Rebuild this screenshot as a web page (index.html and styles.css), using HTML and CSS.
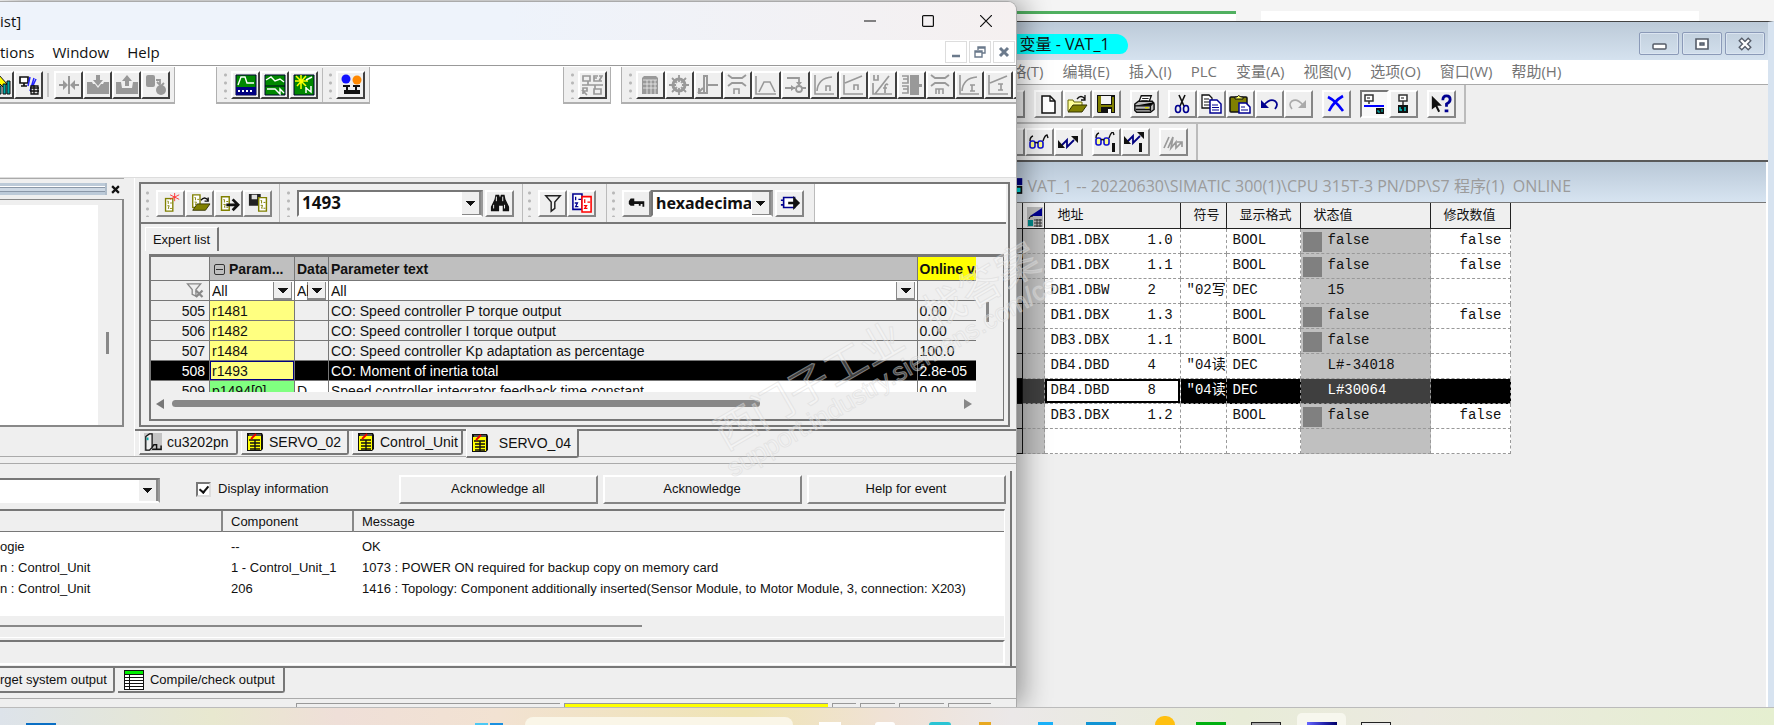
FILE: index.html
```html
<!DOCTYPE html>
<html lang="zh-CN">
<head>
<meta charset="utf-8">
<title>Expert list / VAT_1</title>
<link rel="stylesheet" href="styles.css">
</head>
<body>
<svg class="defs" aria-hidden="true">
  <symbol id="page12" viewBox="0 0 10 16"><path d="M1 1h8v14H1z" fill="#fff" stroke="#808000" stroke-width="1.5"/><path d="M3 4h1v3M6 6h2M3 9h2l-1 3h1M6 12h2" fill="none" stroke="#808000"/></symbol>
  <symbol id="drive" viewBox="0 0 18 20"><path d="M1 1h15l1 2v14l-2 2H1z" fill="#111"/><path d="M2 4h13v14H2z" fill="#ff0"/><path d="M3 8h11M4 11h10M4 14h10M4 17h10M9 8v10" stroke="#111" stroke-width="1.4"/><path d="M3 3h12" stroke="#999"/><path d="M5 7l5-5" stroke="#e00" stroke-width="1.8"/></symbol>
  <symbol id="glasses" viewBox="0 0 22 20"><g fill="#ff8" stroke="#1010d0" stroke-width="1.6"><rect x="2" y="9" width="5" height="7" rx="2"/><rect x="10" y="9" width="5" height="7" rx="2"/></g><path d="M2 9q0-4 3-5M15 9q2-6 4-6l1 3M7 11q1-1 3 0" fill="none" stroke="#111" stroke-width="1.4"/></symbol>
  <symbol id="zigzag" viewBox="0 0 22 20"><path d="M4 14l6-6v7l7-7" fill="none" stroke="#000080" stroke-width="1.8"/><path d="M1 8v8h7zM14 4h7v7z" fill="#111"/></symbol>
  <symbol id="curve" viewBox="0 0 22 22"><path d="M2 1v19h19M4 17Q5 4 19 3" fill="none" stroke="#999" stroke-width="1.6"/></symbol>
  <symbol id="ramp" viewBox="0 0 22 22"><path d="M2 1v19h19M3 9l17-7" fill="none" stroke="#999" stroke-width="1.6"/></symbol>
  <symbol id="press" viewBox="0 0 22 22"><path d="M2 1l4 3h10l4-3M2 12l4-3h10l4 3" fill="none" stroke="#999" stroke-width="1.8"/></symbol>
</svg>

<div class="desktop">
  <div class="backdrop"><div class="doc doc-green"></div><div class="doc doc-plain"></div></div>

  <section class="win vat">
    <header class="vat-title"><h1>变量 - VAT_1</h1>
      <div class="aero">
        <button aria-label="最小化"><svg viewBox="0 0 20 16"><rect x="4" y="8" width="13" height="5" rx="1" fill="#fff" stroke="#555c68" stroke-width="1.5"/></svg></button>
        <button aria-label="还原"><svg viewBox="0 0 20 16"><path d="M4 3h12v10H4z" fill="#fff" stroke="#555c68" stroke-width="1.6"/><path d="M8 7h4v2H8z" fill="#9fb0c8" stroke="#555c68" stroke-width="1.4"/></svg></button>
        <button aria-label="关闭"><svg viewBox="0 0 20 16"><path d="M5 3l10 10M15 3L5 13" stroke="#555c68" stroke-width="5"/><path d="M6 4l8 8M14 4l-8 8" stroke="#fff" stroke-width="2.4"/></svg></button>
      </div>
    </header>
    <nav class="vat-menu"><span class="cut">格(T)</span><span>编辑(E)</span><span>插入(I)</span><span>PLC</span><span>变量(A)</span><span>视图(V)</span><span>选项(O)</span><span>窗口(W)</span><span>帮助(H)</span></nav>
    <div class="vat-tools">
      <div class="strip first">
        <button class="tb sliver" aria-label="钉住"></button>
        <div class="set">
          <button class="tb" aria-label="新建"><svg viewBox="0 0 22 20"><path d="M5 2h8l5 5v12H5z" fill="#fff" stroke="#111" stroke-width="1.5"/><path d="M13 2v5h5" fill="none" stroke="#111" stroke-width="1.3"/></svg></button>
          <button class="tb" aria-label="打开"><svg viewBox="0 0 22 20"><path d="M2 17V6h5l1 2h8v4" fill="#ff9" stroke="#660"/><path d="M2 18l5-7h14l-5 7z" fill="#808000" stroke="#330"/><path d="M11 5q4-5 8 0M19 1v5h-4" fill="none" stroke="#111" stroke-width="1.3"/></svg></button>
          <button class="tb" aria-label="保存"><svg viewBox="0 0 22 20"><path d="M2 1h18v18H3l-1-1z" fill="#111"/><path d="M3 2h3v16H3zM17 3h2v15h-2z" fill="#808000"/><path d="M6 2h10v8H6z" fill="#f4f4f4"/><path d="M6 11h11v2H6z" fill="#808000"/><path d="M13 15h3v4h-3z" fill="#fff"/></svg></button>
        </div>
        <div class="set"><button class="tb" aria-label="打印"><svg viewBox="0 0 24 20"><path d="M6 9l3-8h11l-3 8z" fill="#fff" stroke="#111" stroke-width="1.4"/><path d="M10 4h7M9 6.500h7" stroke="#111"/><path d="M2 10l4-3h15l2 3v6l-4 3H4l-2-2z" fill="#bbb" stroke="#111" stroke-width="1.6"/><path d="M2 12h17l4-4M3 16h16M19 12v6" stroke="#111" stroke-width="1.4"/><path d="M13 14h4" stroke="#dd0" stroke-width="1.5"/></svg></button></div>
        <div class="set">
          <button class="tb" aria-label="剪切"><svg viewBox="0 0 22 20"><path d="M8 1l5 11M14 1L9 12" stroke="#111" stroke-width="1.6"/><ellipse cx="7" cy="15" rx="2.500" ry="3.500" fill="none" stroke="#000090" stroke-width="1.6"/><ellipse cx="15" cy="15" rx="2.500" ry="3.500" fill="none" stroke="#000090" stroke-width="1.6"/></svg></button>
          <button class="tb" aria-label="复制"><svg viewBox="0 0 22 20"><path d="M2 1h7l3 3v10H2z" fill="#fff" stroke="#111" stroke-width="1.3"/><path d="M4 5h5M4 8h6M4 11h6" stroke="#111"/><path d="M10 6h7l4 4v9H10z" fill="#fff" stroke="#000090" stroke-width="1.5"/><path d="M12 11h6M12 13.500h7M12 16h7" stroke="#000090"/></svg></button>
          <button class="tb" aria-label="粘贴"><svg viewBox="0 0 22 20"><rect x="1" y="3" width="17" height="15" rx="1" fill="#808000" stroke="#111" stroke-width="1.5"/><path d="M6 5V3h2q1-3 4 0h2v2z" fill="#ff6" stroke="#111"/><path d="M10 9h7l4 4v6H10z" fill="#fff" stroke="#000090" stroke-width="1.5"/><path d="M12 13h4M12 16h7" stroke="#000090"/></svg></button>
          <button class="tb" aria-label="撤消"><svg viewBox="0 0 22 20"><path d="M3 6v8h8z" fill="#000090"/><path d="M6 11q6-7 11-4 4 3 0 8" fill="none" stroke="#000090" stroke-width="1.8"/></svg></button>
          <button class="tb" aria-label="重做"><svg viewBox="0 0 22 20"><path d="M19 6v8h-8z" fill="#aaa"/><path d="M16 11q-6-7-11-4-4 3 0 8" fill="none" stroke="#aaa" stroke-width="1.6"/></svg></button>
        </div>
        <div class="set"><button class="tb" aria-label="删除"><svg viewBox="0 0 22 20"><path d="M3 3q8 4 15 14M18 2Q9 7 4 17" fill="none" stroke="#00f" stroke-width="2.600"/></svg></button></div>
        <div class="set">
          <button class="tb down" aria-label="在线"><svg viewBox="0 0 22 20"><path d="M2 1h8v6H2zM6 7v3" fill="#fff" stroke="#333" stroke-width="1.5"/><path d="M4 4h3" stroke="#111"/><path d="M1 11h20v2H1z" fill="#00f"/><path d="M13 14h8v6h-8z" fill="#111"/><path d="M15 16v2h2M19 15v3" stroke="#0cc" fill="none"/></svg></button>
          <button class="tb" aria-label="直接在线"><svg viewBox="0 0 22 20"><path d="M7 1h8v6H7zM11 7v5" fill="#fff" stroke="#333" stroke-width="1.5"/><path d="M9 4h3" stroke="#111"/><path d="M6 11h10v8H6z" fill="#111"/><path d="M8 13v3h2M13 13v4" stroke="#0cc" stroke-width="1.4" fill="none"/></svg></button>
        </div>
        <div class="set"><button class="tb" aria-label="帮助"><svg viewBox="0 0 24 20"><path d="M2 1v15l4-3 3 6 2-1-3-6h5z" fill="#111"/><path d="M14 6q0-5 4-5t4 4q0 3-4 5v3" fill="none" stroke="#000090" stroke-width="3"/><path d="M16 16h4v3h-4z" fill="#000090"/></svg></button></div>
      </div>
      <div class="strip second">
        <button class="tb sliver" aria-label="触发器"></button>
        <button class="tb" aria-label="监视变量"><svg viewBox="0 0 22 20"><use href="#glasses"/></svg></button>
        <button class="tb" aria-label="修改变量"><svg viewBox="0 0 22 20"><use href="#zigzag"/></svg></button>
        <div class="set">
          <button class="tb" aria-label="更新状态值"><svg viewBox="0 0 22 20"><use href="#glasses" x="-1" y="-3"/><path d="M17 11h3v9h-3z" fill="#111"/></svg></button>
          <button class="tb" aria-label="激活修改值"><svg viewBox="0 0 22 20"><use href="#zigzag" x="-1" y="-4"/><path d="M15 11h3v9h-3z" fill="#111"/></svg></button>
        </div>
        <div class="set"><button class="tb" aria-label="强制"><svg viewBox="0 0 22 20"><path d="M2 16L7 5M6 16l5-11-2 11 5-6v6l6-6M15 10h5v5" fill="none" stroke="#999" stroke-width="1.7"/></svg></button></div>
      </div>
    </div>
    <div class="vat-child">
      <header class="child-title"><svg viewBox="0 0 8 20"><path d="M0 1h6v8H0z" fill="#000080"/><path d="M0 10h6v9H0z" fill="#111"/><path d="M0 12h4v5H0z" fill="#0dd"/></svg><h2>VAT_1 -- 20220630\SIMATIC 300(1)\CPU 315T-3 PN/DP\S7 程序(1)&nbsp; ONLINE</h2></header>
      <table class="vars">
        <colgroup><col class="v0"><col class="v1"><col class="v2"><col class="v3"><col class="v4"><col class="v5"><col class="v6"></colgroup>
        <thead><tr><th></th><th class="ico"><svg viewBox="0 0 16 20"><path d="M0 0h16v20H0z" fill="#bbb"/><path d="M3 9l12-8v8z" fill="#000090"/><path d="M2 12q0-3 4-3" fill="none" stroke="#111"/><path d="M1 13h5v6H1z" fill="#088"/><path d="M7 13h8M7 16h8M7 19h8M10 12v8M13 12v8" stroke="#333"/></svg></th><th>地址</th><th>符号</th><th>显示格式</th><th>状态值</th><th>修改数值</th></tr></thead>
        <tbody>
          <tr><td></td><td></td><td><div class="pair"><span>DB1.DBX</span><span>1.0</span></div></td><td></td><td>BOOL</td><td class="bit"><i></i>false</td><td>false</td></tr>
          <tr><td></td><td></td><td><div class="pair"><span>DB1.DBX</span><span>1.1</span></div></td><td></td><td>BOOL</td><td class="bit"><i></i>false</td><td>false</td></tr>
          <tr><td></td><td></td><td><div class="pair"><span>DB1.DBW</span><span>2</span></div></td><td>"02写</td><td>DEC</td><td>15</td><td></td></tr>
          <tr><td></td><td></td><td><div class="pair"><span>DB1.DBX</span><span>1.3</span></div></td><td></td><td>BOOL</td><td class="bit"><i></i>false</td><td>false</td></tr>
          <tr><td></td><td></td><td><div class="pair"><span>DB3.DBX</span><span>1.1</span></div></td><td></td><td>BOOL</td><td class="bit"><i></i>false</td><td></td></tr>
          <tr><td></td><td></td><td><div class="pair"><span>DB4.DBD</span><span>4</span></div></td><td>"04读</td><td>DEC</td><td>L#-34018</td><td></td></tr>
          <tr class="sel"><td></td><td></td><td><div class="pair"><span>DB4.DBD</span><span>8</span></div></td><td>"04读</td><td>DEC</td><td>L#30064</td><td></td></tr>
          <tr><td></td><td></td><td><div class="pair"><span>DB3.DBX</span><span>1.2</span></div></td><td></td><td>BOOL</td><td class="bit"><i></i>false</td><td>false</td></tr>
          <tr><td></td><td></td><td></td><td></td><td></td><td></td><td></td></tr>
        </tbody>
      </table>
    </div>
  </section>

  <section class="win starter">
    <header class="top-title"><h1>ist]</h1>
      <div class="caps">
        <button aria-label="Minimize"><svg viewBox="0 0 12 12"><path d="M0 6h12" stroke="#111" stroke-width="1.2"/></svg></button>
        <button aria-label="Maximize"><svg viewBox="0 0 12 12"><rect x=".6" y=".6" width="10.800" height="10.800" rx="1" fill="none" stroke="#111" stroke-width="1.2"/></svg></button>
        <button aria-label="Close"><svg viewBox="0 0 12 12"><path d="M0 0l12 12M12 0L0 12" stroke="#111" stroke-width="1.2"/></svg></button>
      </div>
    </header>
    <nav class="top-menu"><span>tions</span><span>Window</span><span>Help</span>
      <div class="mdi">
        <button aria-label="Minimize child"><svg viewBox="0 0 12 12"><path d="M2 10h8" stroke="#6b7a8c" stroke-width="2.500"/></svg></button>
        <button aria-label="Restore child"><svg viewBox="0 0 12 12"><path d="M4 4V1h7v6H8M4 2h7M1 5h7v6H1zM1 6h7" fill="none" stroke="#6b7a8c" stroke-width="1.4"/></svg></button>
        <button aria-label="Close child"><svg viewBox="0 0 12 12"><path d="M2 2l8 8M10 2l-8 8" stroke="#6b7a8c" stroke-width="3"/></svg></button>
      </div>
    </nav>
    <div class="bars">
      <div class="bar b1">
        <button class="tb dk half" aria-label="Project"><svg viewBox="0 0 22 22"><path d="M10 1l8 9-4 3-8-8z" fill="#ff0" stroke="#111"/><path d="M9 12h3v8H9zM14 10h3v10h-3zM18 7h3v13h-3z" fill="#0aa" stroke="#111"/></svg></button>
        <button class="tb dk" aria-label="Connect"><svg viewBox="0 0 22 22"><path d="M2 3h8v6H2zM6 9v3M3 12h6" fill="#fff" stroke="#111" stroke-width="1.7"/><path d="M12 3l-2 9M16 4l-4 13M18 5l-5 11" stroke="#22f" stroke-width="1.5"/><path d="M13 12h7v8h-7zM12 14h9M12 17h9M16 11v9" fill="#ddd" stroke="#111" stroke-width="1.3"/></svg></button>
        <i class="rule"></i>
        <button class="tb dk" disabled aria-label="Align"><svg viewBox="0 0 22 22"><path d="M10 2h2v18h-2zM1 10h4V6l5 5-5 5v-4H1zM21 10h-4V6l-5 5 5 5v-4h4z" fill="#999"/></svg></button>
        <button class="tb dk" disabled aria-label="Download"><svg viewBox="0 0 22 22"><path d="M0 8h5l1 2h2l3 4 3-4h2l1-2h5v12H0zM9 1h4v5h3l-5 6-5-6h3z" fill="#999"/></svg></button>
        <button class="tb dk" disabled aria-label="Upload"><svg viewBox="0 0 22 22"><path d="M0 8h5l1 6h10l1-6h5v12H0z" fill="#999"/><path d="M9 12V7H6l5-6 5 6h-3v5z" fill="#999"/></svg></button>
        <button class="tb dk" disabled aria-label="Copy to ROM"><svg viewBox="0 0 22 22"><rect x="1" y="1" width="9" height="12" rx="2" fill="#999"/><circle cx="16" cy="16" r="5" fill="#999"/><path d="M11 6h4v4M12 8l4 4 3-3" fill="none" stroke="#999" stroke-width="1.8"/></svg></button>
      </div>
      <div class="bar b2">
        <i class="grip"></i>
        <button class="tb dk" aria-label="Trace"><svg viewBox="0 0 22 22"><path d="M1 1h20v20H1z" fill="#080" stroke="#003"/><path d="M1 13h20v8H1z" fill="#000080"/><path d="M3 11l3-8h4l2 6h7" fill="none" stroke="#fff" stroke-width="1.4"/><path d="M3 17h16" stroke="#fff" stroke-width="2" stroke-dasharray="2 2"/></svg></button>
        <button class="tb dk" aria-label="Bode"><svg viewBox="0 0 22 22"><path d="M1 1h20v20H1z" fill="#080" stroke="#003"/><path d="M1 12h20" stroke="#002"/><path d="M2 6l5-3 4 4 5-2 4 3M3 15h8l5 5v-5l4 4" fill="none" stroke="#fff" stroke-width="1.4"/></svg></button>
        <button class="tb dk" aria-label="Measure"><svg viewBox="0 0 22 22"><path d="M1 1h20v20H1z" fill="#080" stroke="#003"/><path d="M8 1v14M2 7h13M3 2l10 10M13 2L4 12" stroke="#ff0" stroke-width="1.500"/><path d="M13 6l6-3M13 19v-6M13 14l5 4v-6" stroke="#fff" stroke-width="1.5" fill="none"/></svg></button>
        <i class="seam"></i><i class="grip"></i>
        <button class="tb dk" aria-label="Assign"><svg viewBox="0 0 22 22"><circle cx="6" cy="5" r="4.500" fill="#11f"/><circle cx="17" cy="6" r="4.500" fill="#f80"/><path d="M3 12h7M13 12h7M7 12v4M16 12v4" stroke="#111" stroke-width="2"/><path d="M4 16h16v4H4z" fill="#111"/></svg></button>
      </div>
      <div class="bar b3"><i class="grip"></i><button class="tb dk" disabled aria-label="Overview"><svg viewBox="0 0 22 22" fill="none" stroke="#999" stroke-width="1.7"><path d="M2 2h7v5H2zM17 2h-4v5h4M13 4h3M18 2h3l-3 5h3M1 11h21M7 7v4M2 20v-6h4v3H2l4 4M14 11v4M13 15h7v5h-7z"/></svg></button></div>
      <div class="bar b4"><i class="grip"></i>
        <button class="tb dk" disabled aria-label="Configuration"><svg viewBox="0 0 22 22"><path d="M3 4l2-2h12l2 2v16H3z" fill="#999"/><path d="M4 6h14M4 10h14M4 14h14M8 6v14M12 6v14M16 6v14" stroke="#eee" stroke-width=".8"/></svg></button>
        <button class="tb dk" disabled aria-label="Control logic"><svg viewBox="0 0 22 22"><circle cx="11" cy="11" r="6" fill="none" stroke="#999" stroke-width="3"/><path d="M11 1v20M1 11h20M4 4l14 14M18 4L4 18" stroke="#999" stroke-width="1.8"/><circle cx="11" cy="11" r="3" fill="#eee"/></svg></button>
        <button class="tb dk" disabled aria-label="Brake"><svg viewBox="0 0 22 22"><path d="M7 2h3v17H7zM11 11h10M1 19l5-5M2 14v5h5" fill="none" stroke="#999" stroke-width="2"/></svg></button>
        <button class="tb dk" disabled aria-label="Speed limit"><svg viewBox="0 0 22 22"><use href="#press"/><path d="M8 20v-5h5v5" fill="none" stroke="#999" stroke-width="1.6"/></svg></button>
        <button class="tb dk" disabled aria-label="Ramp function"><svg viewBox="0 0 22 22"><path d="M1 2v18h20M4 18L9 8h6l5 10" fill="none" stroke="#999" stroke-width="1.6"/></svg></button>
        <button class="tb dk" disabled aria-label="Setpoint"><svg viewBox="0 0 22 22"><path d="M3 4h12v6M1 14h10M18 14h4" fill="none" stroke="#999" stroke-width="1.8"/><circle cx="15" cy="15" r="3" fill="none" stroke="#999" stroke-width="1.8"/><path d="M12 8h6l-3 4zM7 11v6l4-3z" fill="#999"/></svg></button>
        <button class="tb dk" disabled aria-label="Speed controller"><svg viewBox="0 0 22 22"><use href="#curve"/><path d="M13 17v-5h4v5" fill="none" stroke="#999" stroke-width="1.6"/></svg></button>
        <button class="tb dk" disabled aria-label="Speed ramp"><svg viewBox="0 0 22 22"><use href="#ramp"/><path d="M12 16v-5h4v5" fill="none" stroke="#999" stroke-width="1.6"/></svg></button>
        <button class="tb dk" disabled aria-label="U/f control"><svg viewBox="0 0 22 22"><path d="M3 1v5h4V1M2 9v11h19M4 20L18 2M17 11q-2-2-3 1v7M12 14h4" fill="none" stroke="#999" stroke-width="1.7"/></svg></button>
        <button class="tb dk" disabled aria-label="Motor"><svg viewBox="0 0 22 22"><path d="M10 1h9v20h-9zM19 10h3v3h-3z" fill="#999"/><path d="M2 2h6v3H3M8 5v4H2M2 12h6v7H2M3 15h5" fill="none" stroke="#999" stroke-width="1.7"/></svg></button>
        <button class="tb dk" disabled aria-label="Torque limit"><svg viewBox="0 0 22 22"><use href="#press"/><path d="M7 20v-5h7v5M10 15v5" fill="none" stroke="#999" stroke-width="1.6"/></svg></button>
        <button class="tb dk" disabled aria-label="Current controller"><svg viewBox="0 0 22 22"><use href="#curve"/><path d="M12 11h5M12 17h5M14 11v6" fill="none" stroke="#999" stroke-width="1.6"/></svg></button>
        <button class="tb dk" disabled aria-label="Current ramp"><svg viewBox="0 0 22 22"><use href="#ramp"/><path d="M11 10h5M11 16h5M14 10v6" fill="none" stroke="#999" stroke-width="1.6"/></svg></button>
        <button class="tb dk" disabled aria-label="More"><svg viewBox="0 0 22 22"><path d="M1 3h14v14H1z" fill="#999"/></svg></button>
      </div>
    </div>

    <div class="work">
      <aside class="tree">
        <div class="tree-head"><span class="bars-grip"></span><button aria-label="Close panel"><svg viewBox="0 0 8 8"><path d="M1 1l6 6M7 1L1 7" stroke="#111" stroke-width="2"/></svg></button></div>
        <div class="tree-body"><div class="tree-list"></div><div class="tree-scroll"><i></i></div></div>
      </aside>
      <main class="main">
        <div class="pane">
          <div class="pane-tools">
            <div class="group g1"><i class="grip"></i>
              <button class="tb" aria-label="New list"><svg viewBox="0 0 22 22"><use href="#page12" x="3" y="5" width="12" height="16"/><path d="M15 0v9M10 2l10 5M20 2l-10 5" stroke="#f33"/></svg></button>
              <button class="tb" aria-label="Open list"><svg viewBox="0 0 22 22"><use href="#page12" x="1" y="1" width="12" height="16"/><path d="M3 19l5-7h14l-5 7z" fill="#808000" stroke="#330"/><path d="M12 8q4-5 8 0M20 5v4h-4" fill="none" stroke="#111" stroke-width="1.5"/></svg></button>
              <button class="tb" aria-label="Go to list"><svg viewBox="0 0 22 22"><use href="#page12" x="1" y="3" width="12" height="17"/><path d="M8 13h12M15 7l6 6-6 6" fill="none" stroke="#111" stroke-width="3"/></svg></button>
              <button class="tb" aria-label="Save list"><svg viewBox="0 0 22 22"><path d="M1 1h13v13H1z" fill="#222"/><path d="M4 2h6v5H4z" fill="#ddd"/><use href="#page12" x="10" y="4" width="12" height="17"/></svg></button>
            </div>
            <div class="group g2"><i class="grip"></i>
              <select class="combo num" aria-label="Search"><option>1493</option></select>
              <button class="tb" aria-label="Find"><svg viewBox="0 0 22 22"><path d="M6 2h4l1 3 1-3h4l1 5 4 8v5h-7v-6h-4v6H1v-5l4-8z" fill="#111"/><path d="M7 4v5M14 4v5M4 13v4M16 13v4" stroke="#fff"/></svg></button>
            </div>
            <div class="group g3"><i class="grip"></i>
              <button class="tb" aria-label="Filter"><svg viewBox="0 0 22 22"><path d="M3 3h16l-6 7v7l-4 3V10z" fill="#eee" stroke="#222" stroke-width="1.6"/></svg></button>
              <button class="tb" aria-label="Compare"><svg viewBox="0 0 22 22"><path d="M1 1h10v17H1z" fill="#fff" stroke="#000090" stroke-width="1.700"/><path d="M4 4v4M7 7h3M3 11h3l-2 4h3" fill="none" stroke="#000090" stroke-width="1.4"/><path d="M11 4h10v17H11z" fill="#fff" stroke="#f00" stroke-width="1.700"/><path d="M14 7v4M17 10h3M13 14h3l-2 3h3" fill="none" stroke="#f00" stroke-width="1.4"/></svg></button>
            </div>
            <div class="group g4"><i class="grip"></i>
              <button class="tb" aria-label="Key"><svg viewBox="0 0 22 22"><path d="M2 9l2-3h4v3h11v6h-2v-3h-2v2h-2v-2H8v2H4l-2-2z" fill="#111"/></svg></button>
              <select class="combo hex" aria-label="Number format"><option>hexadecimal</option></select>
              <button class="tb gap" aria-label="Apply"><svg viewBox="0 0 22 22"><path d="M4 5h12v11H4zM1 8h3M1 13h3" fill="#fff" stroke="#000090" stroke-width="1.8"/><path d="M9 11h8M16 7l4 4-4 4z" stroke="#111" stroke-width="3" fill="#111"/></svg></button>
            </div>
          </div>
          <div class="tab-row"><button class="toptab">Expert list</button></div>
          <div class="sheet">
            <div class="grid-area">
              <div class="grid-clip">
              <table class="params">
                <colgroup><col class="c0"><col class="c1"><col class="c2"><col><col class="c4"></colgroup>
                <thead>
                  <tr class="hd"><th></th><th><span class="minus"></span>Param...</th><th>Data</th><th>Parameter text</th><th class="onl">Online value</th></tr>
                  <tr class="flt"><td class="n"><svg viewBox="0 0 18 16"><path d="M1 1h14l-5 6v7l-4-2V7z" fill="#eee" stroke="#888" stroke-width="1.4"/><path d="M10 8l7 7M17 8l-7 7" stroke="#888" stroke-width="2.400"/></svg></td><td><select aria-label="Filter parameter"><option>All</option></select></td><td><select aria-label="Filter data"><option>All</option></select></td><td><select aria-label="Filter text"><option>All</option></select></td><td></td></tr>
                </thead>
                <tbody>
                  <tr><td>505</td><td>r1481</td><td></td><td>CO: Speed controller P torque output</td><td>0.00</td></tr>
                  <tr><td>506</td><td>r1482</td><td></td><td>CO: Speed controller I torque output</td><td>0.00</td></tr>
                  <tr><td>507</td><td>r1484</td><td></td><td>CO: Speed controller Kp adaptation as percentage</td><td>100.0</td></tr>
                  <tr class="on"><td>508</td><td>r1493</td><td></td><td>CO: Moment of inertia total</td><td>2.8e-05</td></tr>
                  <tr class="wr"><td>509</td><td>p1494[0]</td><td>D</td><td>Speed controller integrator feedback time constant</td><td>0.00</td></tr>
                </tbody>
              </table>
              </div>
              <div class="vscroll"><i></i></div>
            </div>
            <div class="hscroll"><b class="larr"></b><span><i></i></span><b class="rarr"></b></div>
          </div>
        </div>
        <div class="doc-tabs">
          <button><svg viewBox="0 0 20 20"><path d="M0 0h20v20H0z" fill="#c4c4c4"/><path d="M2 4l4-3h3v15l-3 3H2z" fill="#eee" stroke="#111" stroke-width="1.4"/><path d="M4 5v3" stroke="#0aa" stroke-width="2"/><path d="M9 16l2-3h3v5h5v-4M9 18h6" fill="none" stroke="#111" stroke-width="1.6"/></svg>cu3202pn</button>
          <button><svg viewBox="0 0 18 20"><use href="#drive"/></svg>SERVO_02</button>
          <button><svg viewBox="0 0 18 20"><use href="#drive"/></svg>Control_Unit</button>
          <button class="cur"><svg viewBox="0 0 18 20"><use href="#drive"/></svg>SERVO_04</button>
        </div>
      </main>
    </div>

    <div class="alarm">
      <div class="alarm-tools">
        <select aria-label="Alarm filter"><option></option></select>
        <label><input type="checkbox" checked>Display information</label>
        <div class="acks"><button>Acknowledge all</button><button>Acknowledge</button><button>Help for event</button></div>
      </div>
      <div class="alarm-list">
        <table>
          <colgroup><col class="a0"><col class="a1"><col></colgroup>
          <thead><tr><th></th><th>Component</th><th>Message</th></tr></thead>
          <tbody>
            <tr><td>ogie</td><td>--</td><td>OK</td></tr>
            <tr><td>n : Control_Unit</td><td>1 - Control_Unit_1</td><td>1073 : POWER ON required for backup copy on memory card</td></tr>
            <tr><td>n : Control_Unit</td><td>206</td><td>1416 : Topology: Component additionally inserted(Sensor Module, to Motor Module, 3, connection: X203)</td></tr>
          </tbody>
        </table>
        <div class="alarm-scroll"><i></i></div>
      </div>
      <div class="alarm-note"></div>
    </div>
    <div class="out-tabs"><button class="cutleft">rget system output</button><button><svg viewBox="0 0 20 20"><path d="M0 0h20v20H0z" fill="#111"/><path d="M1 1h18v3H1z" fill="#0e0"/><path d="M1 5h4v2H1zM6 5h13v2H6zM1 8h4v2H1zM6 8h13v2H6zM1 11h4v2H1zM6 11h13v2H6zM1 14h4v2H1zM6 14h13v2H6zM1 17h4v2H1zM6 17h13v2H6z" fill="#fff"/></svg>Compile/check output</button></div>
    <div class="status"><i class="s1"></i><i class="s2"></i><i class="s3"></i><i class="s4"></i><i class="s5"></i><i class="s6"></i></div>
  </section>

  <div class="mark" aria-hidden="true"><p class="m1">西门子工业&ensp;&nbsp;找答案</p><p class="m2">support.industry.siemens.com/cs</p></div>

  <footer class="taskbar">
    <i class="wid"></i><i class="start"></i><i class="search"></i>
    <div class="apps">
      <button aria-label="Task view"><i class="k1"></i></button><button aria-label="Chat"><i class="k2"></i></button><button aria-label="Edge"><i class="k3"></i></button><button aria-label="Explorer"><i class="k4"></i></button><button aria-label="Store"><i class="k5"></i></button><button aria-label="Mail"><i class="k6"></i></button><button aria-label="Messenger"><i class="k7"></i></button><button aria-label="WeChat"><i class="k8"></i></button><button aria-label="Starter"><i class="k9"></i></button><button class="act" aria-label="SIMATIC"><i class="k10"></i></button><button aria-label="VAT"><i class="k11"></i></button>
    </div>
  </footer>
</div>
</body>
</html>
```

FILE: styles.css
```css
* { box-sizing: border-box; }
html, body { height: 100%; }
body { margin: 0; overflow: hidden; font: 14px/20px "Liberation Sans", "Noto Sans CJK SC", sans-serif; color: #111; }
h1, h2, p { margin: 0; font-weight: 400; }
button, select, input { font: inherit; color: inherit; margin: 0; }
button { padding: 0; background: none; border: 0; }
svg { display: block; flex: none; }
i { display: block; flex: none; }
.defs { position: absolute; width: 0; height: 0; }
.desktop { position: relative; height: 100vh; background: #f4f4f4; overflow: hidden; }
.backdrop { display: flex; gap: 25px; padding: 11px 75px 0 0; margin-left: 57.3%; }
.doc { height: 12px; background: #fff; }
.doc-green { flex: 1; border-top: 3px solid #50b060; }
.doc-plain { flex: 2; }
.win { position: absolute; display: flex; flex-direction: column; overflow: hidden; background: #efefef; }
.win > * { flex: none; }

/* raised tool buttons */
.tb { width: 29px; height: 28px; flex: none; display: flex; align-items: center; justify-content: center; background: #efefef; border: 2px solid; border-color: #fff #858585 #858585 #fff; }
.tb svg { width: 22px; height: 20px; }
.tb.dk { border-color: #fff #404040 #404040 #fff; }
.tb.down { background: #f8f8f8; border-color: #777 #fff #fff #777; }
.tb.sliver { width: 8px; border-left: 0; }
.grip { width: 3px; height: 28px; background: radial-gradient(circle, #b8b8b8 1px, transparent 2px) 0 0 / 3px 8px; }

/* variable table window */
.vat { top: 21px; bottom: 18px; left: 57.3%; right: 0; border-top: 1px solid #444; border-right: 6px solid #d7e3f0; }
.vat-title { display: flex; align-items: center; justify-content: space-between; height: 38px; padding-top: 5px; background: linear-gradient(#bccad8, #d5e2ef); font-family: "Open Sans", "Noto Sans CJK SC", sans-serif; }
.vat-title h1 { font-size: 16px; line-height: 20px; padding: 0 18px 0 3px; background: #0ff; border-radius: 0 12px 8px 0; }
.aero { display: flex; gap: 3px; padding-right: 3px; }
.aero button { width: 40px; height: 23px; border: 1px solid #8b9ab8; border-radius: 2px; box-shadow: inset 0 0 0 1px #dbe5f1; display: flex; align-items: center; justify-content: center; }
.aero svg { width: 20px; height: 16px; }
.vat-menu { display: flex; gap: 19px; height: 25px; line-height: 23px; background: #fff; color: #747474; font-family: "Open Sans", "Noto Sans CJK SC", sans-serif; font-size: 15px; border-bottom: 1px solid #aaa; overflow: hidden; white-space: nowrap; }
.vat-menu .cut { width: 27px; display: flex; justify-content: flex-end; }
.vat-tools { display: flex; flex-direction: column; align-items: flex-start; height: 77px; border-bottom: 2px solid #5a5a5a; }
.strip { display: flex; align-items: center; }
.strip.first { height: 39px; padding-top: 1px; padding-right: 8px; gap: 9px; border-right: 2px solid #bbb; border-bottom: 2px solid #bbb; }
.strip.second { height: 36px; padding-right: 8px; border-right: 2px solid #bbb; }
.strip.second .set { margin-left: 9px; }
.second .sliver { width: 8px; }
.set { display: flex; }
.vat > .vat-child { flex: 1; border-right: 2px solid #fff; }
.child-title { display: flex; align-items: center; gap: 4px; height: 41px; padding-top: 8px; background: linear-gradient(#b9c8d7, #d7e4f1); border-bottom: 1px solid #777; color: #9b9b9b; font-family: "Open Sans", "Noto Sans CJK SC", sans-serif; white-space: nowrap; }
.child-title svg { width: 7px; height: 20px; }
.child-title h2 { font-size: 16px; }
.vars { border-collapse: separate; border-spacing: 0; table-layout: fixed; width: 494px; font: 14px/20px "Liberation Mono", "Noto Sans CJK SC", monospace; }
.v0 { width: 6px; } .v1 { width: 22px; } .v2 { width: 136px; } .v3 { width: 46px; } .v4 { width: 74px; } .v5 { width: 130px; } .v6 { width: 80px; }
.vars th { height: 26px; padding: 1px 0 0 13px; font-weight: 400; font-size: 13px; background: #efefef; border-right: 1px solid #222; border-bottom: 1px solid #222; text-align: left; white-space: nowrap; overflow: hidden; }
.vars th:first-child, .vars th.ico { padding: 0; }
.vars .ico svg { width: 16px; height: 20px; margin: 2px 0 0 4px; }
.vars td { height: 25px; padding: 0 0 3px 6px; background: #fff; border-right: 1px dashed #999; border-bottom: 1px dashed #999; white-space: nowrap; overflow: hidden; }
.vars td:nth-child(1) { padding: 0; background: #bbb; border-right: 1px solid #111; border-bottom-style: solid; border-bottom-color: #111; }
.vars td:nth-child(2) { background: #bfbfbf; }
.vars td:nth-child(6) { padding-left: 27px; background: #c0c0c0; }
.vars td:nth-child(7) { padding-right: 8px; text-align: right; }
.pair { display: grid; grid-template-columns: 97px 1fr; }
.vars td.bit { padding-left: 2px; }
.bit i { float: left; width: 19px; height: 20px; margin: 2px 6px -2px 0; background: #808080; }
.vars .sel td { background: #000; color: #fff; }
.vars .sel td:nth-child(2), .vars .sel td:nth-child(6) { background: #3f3f3f; }
.vars .sel td:nth-child(3) { background: #fff; color: #111; box-shadow: inset 0 0 0 2px #000; }

/* drive window */
.starter { top: 1px; bottom: 18px; left: 0; width: 57.3%; border: solid #aaa; border-width: 1px 1px 0 0; border-top-right-radius: 9px; background: #efefef; box-shadow: 6px 0 28px rgba(0, 0, 0, .38); }
.top-title { display: flex; justify-content: space-between; align-items: center; height: 38px; padding-right: 1px; background: linear-gradient(90deg, #eef3fb 50%, #f5f0f0); font-family: "Open Sans", sans-serif; }
.top-title h1 { font-size: 15px; }
.caps { display: flex; }
.caps button { width: 58px; height: 38px; display: flex; align-items: center; justify-content: center; }
.caps svg { width: 12px; height: 12px; }
.top-menu { display: flex; align-items: center; gap: 18px; height: 26px; padding-bottom: 2px; background: #fff; border-bottom: 1px solid #999; font: 15px/22px "Open Sans", sans-serif; }
.mdi { display: flex; gap: 2px; margin: 0 1px 0 auto; }
.mdi button { width: 22px; height: 22px; border: 1px solid #ddd; display: flex; align-items: center; justify-content: center; }
.mdi svg { width: 12px; height: 12px; }
.bars { display: flex; align-items: flex-start; height: 112px; padding-top: 1px; background: #fff; border-bottom: 1px solid #ddd; }
.bar { display: flex; align-items: center; height: 37px; background: #efefef; border: solid #b0b0b0; border-width: 0 1px 2px; flex: none; }
.b1 { width: 175px; overflow: hidden; justify-content: flex-end; padding-right: 4px; border-left: 0; margin-right: 41px; }
.b1 .rule { width: 2px; height: 24px; margin: 0 5px 0 4px; background: #c4c4c4; }
.b2 { padding: 0 4px 0 7px; margin-right: auto; }
.b2 .grip { margin-right: 4px; }
.b2 .seam { width: 1px; height: 34px; background: #bbb; margin: 0 6px 0 4px; }
.b3 { padding: 0 3px 0 7px; margin-right: 10px; }
.b3 .grip, .b4 .grip { margin-right: 4px; }
.b4 { width: 395px; padding-left: 7px; overflow: hidden; border-right: 0; }
.bar .tb svg { width: 22px; height: 22px; }

.starter > .work { flex: 1; display: flex; min-height: 0; border-bottom: 1px solid #aaa; }
.tree { width: 124px; margin-right: 10px; padding-bottom: 29px; display: flex; flex-direction: column; border-top: 1px solid #aaa; background: #efefef; }
.tree-head { display: flex; align-items: center; gap: 4px; height: 20px; }
.bars-grip { flex: 1; height: 12px; background: linear-gradient(#bccad8 3px, #fff 3px 4px, #8b98a8 4px 5px, #cdd8e4 5px 8px, #8b98a8 8px 9px, #bccad8 9px); border-right: 2px solid #b0bdca; }
.tree-head button { width: 9px; height: 9px; margin-right: 4px; }
.tree-body { flex: 1; display: flex; padding-top: 5px; border: 2px solid #888; border-top-width: 1px; border-left: 0; }
.tree-list { flex: 1; background: #fff; }
.tree-scroll { width: 24px; padding: 127px 0 0 8px; }
.tree-scroll i { width: 3px; height: 22px; background: #888; }
.main { flex: 1; min-width: 0; display: flex; flex-direction: column; border-left: 1px solid #fff; }
.pane { flex: none; margin: 4px 6px 0 4px; height: 245px; border: 2px solid #777; padding: 0 2px 2px 0; }
.pane-tools { display: flex; height: 40px; background: #fff; border-bottom: 2px solid #777; }
.group { display: flex; align-items: center; background: #efefef; border-right: 1px solid #bbb; flex: none; }
.group .grip { margin: 0 7px 0 5px; }
.pane-tools .tb { height: 27px; }
.g1 { width: 139px; }
.g2 { width: 243px; }
.g2 .grip { margin-left: 7px; }
.g2 .tb { margin-left: 2px; }
.g3 { width: 84px; }
.g4 { width: 208px; }
.gap { margin-left: 2px; }
select { appearance: none; border-radius: 0; outline: 0; background: #fff; }
.combo, .alarm-tools select, .flt select { background-image: conic-gradient(from -45deg at 50% 100%, #111 90deg, transparent 0), linear-gradient(#efefef, #efefef), linear-gradient(#888, #888); background-repeat: no-repeat; }
.combo, .alarm-tools select { border: 2px solid; border-color: #777 #999 #fff #777; padding: 0 20px 0 3px; height: 27px; background-size: 9px 5px, 17px 22px, 19px 100%; background-position: right 6px center, right 2px top, right top; }
.num { width: 186px; font: 700 17px/20px "Noto Sans", sans-serif; }
.hex { width: 122px; font: 700 16px/20px "Noto Sans", sans-serif; }
.tab-row { display: flex; height: 30px; padding: 3px 0 0 4px; }
.toptab { width: 74px; height: 24px; font-size: 13px; border-top: 1px solid #fff; border-left: 1px solid #fff; border-right: 2px solid #777; }
.sheet { margin: 0 2px 0 8px; height: 167px; border: solid #777; border-width: 3px 1px 2px 2px; display: flex; flex-direction: column; }
.grid-area { display: flex; height: 135px; }
.grid-clip { flex: 1; overflow: hidden; min-width: 0; }
.params { table-layout: fixed; border-collapse: separate; border-spacing: 0; width: 100%; font-size: 14px; line-height: 18px; }
.c0 { width: 59px; } .c1 { width: 85px; } .c2 { width: 34px; } .c4 { width: 58px; }
.params th, .params td { height: 20px; padding: 0 0 0 2px; border-right: 1px solid #777; border-bottom: 1px solid #777; white-space: nowrap; overflow: hidden; text-align: left; background: #efefef; }
.params .hd th { height: 24px; background: #bfbfbf; }
.params .hd th:first-child { background: #efefef; }
.params .hd .onl { background: #ff0; }
.params th:last-child, .params td:last-child { border-right: 0; }
.minus { display: inline-block; width: 11px; height: 11px; margin: 0 4px 0 2px; vertical-align: -1px; border: 1px solid #333; background: linear-gradient(#333, #333) center / 7px 1px no-repeat; border-radius: 2px; }
.params .flt td { background: #fff; }
.params .flt td:first-child, .params .flt td:last-child { background: #efefef; }
.flt svg { width: 18px; height: 15px; margin-left: 33px; }
.flt select { display: block; width: 100%; height: 18px; border: 0; padding: 0 20px 0 0; line-height: 18px; background-size: 10px 5px, 17px 16px, 19px 18px; background-position: right 6px center, right 3px top, right 2px top; }
.params tbody td:first-child { text-align: right; padding-right: 4px; }
.params tbody td:nth-child(2) { background: #ffff80; }
.params .on td { background: #000; color: #fff; }
.params tbody .on td:nth-child(2) { color: #111; box-shadow: inset 0 0 0 1px #000080; }
.params .wr td { background: #fff; }
.params .wr td:first-child { background: #efefef; }
.params tbody .wr td:nth-child(2) { background: #80ff80; }
.vscroll { width: 27px; padding: 45px 0 0 10px; }
.vscroll i { width: 3px; height: 20px; background: #888; }
.hscroll { flex: 1; display: flex; align-items: center; padding: 0 31px 4px 5px; gap: 8px; }
.hscroll span { flex: 1; }
.hscroll i { height: 7px; width: 75%; border-radius: 4px; background: #888; }
.larr, .rarr { border: 5px solid transparent; }
.larr { border-right: 8px solid #777; border-left: 0; }
.rarr { border-left: 8px solid #888; border-right: 0; }
.doc-tabs { display: flex; gap: 3px; margin-top: 2px; padding-left: 4px; border-top: 2px solid #777; }
.doc-tabs button { display: flex; align-items: center; gap: 5px; height: 24px; min-width: 108px; padding: 0 3px 0 4px; border-right: 2px solid #777; border-bottom: 2px solid #777; border-left: 1px solid #fff; border-radius: 0 0 3px 0; }
.doc-tabs svg { width: 18px; height: 20px; }
.doc-tabs button:first-child { min-width: 99px; }
.doc-tabs .cur { margin-top: -2px; height: 29px; min-width: 113px; gap: 10px; padding-top: 1px; background: #efefef; }

.alarm { margin-top: 6px; border-top: 1px solid #aaa; padding-top: 5px; background: linear-gradient(#777, #777) right 4px bottom / 2px 195px no-repeat; border-bottom: 2px solid #777; }
.alarm-tools { display: flex; align-items: center; height: 40px; padding-right: 10px; font-size: 13px; }
.alarm-tools select { width: 160px; height: 25px; border-left: 0; margin-right: 36px; margin-top: 3px; }
.alarm-tools label { display: flex; align-items: center; gap: 7px; }
input[type=checkbox] { appearance: none; width: 15px; height: 15px; background: #fff; border: 2px solid; border-color: #777 #ddd #ddd #777; position: relative; }
input[type=checkbox]:checked::after { content: ""; position: absolute; left: 3px; top: 0; width: 4px; height: 7px; border: solid #111; border-width: 0 2px 2px 0; transform: rotate(40deg); }
.acks { display: flex; gap: 5px; margin-left: auto; }
.acks button { width: 199px; height: 29px; border: 2px solid; border-color: #fff #858585 #858585 #fff; }
.alarm-list { margin-right: 11px; border-top: 2px solid #777; border-bottom: 1px solid #fff; border-right: 1px solid #fff; background: #fff; font-size: 13px; }
.alarm-list table { width: 100%; table-layout: fixed; border-spacing: 0; margin-bottom: 17px; }
.a0 { width: 223px; } .a1 { width: 131px; }
.alarm-list th { height: 21px; padding: 2px 0 0 8px; background: #efefef; font-weight: 400; text-align: left; border-bottom: 1px solid #777; border-right: 2px solid #888; line-height: 18px; }
.alarm-list th:last-child { border-right: 0; }
.alarm-list td { height: 21px; padding: 0 0 0 8px; white-space: nowrap; line-height: 20px; }
.alarm-list tbody tr:first-child td { padding-top: 4px; height: 25px; }
.alarm-list td:first-child { padding-left: 0; }
.alarm-scroll { background: #efefef; height: 21px; padding-top: 9px; }
.alarm-scroll i { width: 64%; height: 2px; background: #888; }
.alarm-note { height: 25px; margin: 2px 11px 1px 0; border: 2px solid; border-color: #777 #fff #fff; border-left: 0; }
.out-tabs { display: flex; gap: 3px; height: 31px; border-bottom: 1px solid #aaa; font-size: 13px; }
.out-tabs button { height: 25px; display: flex; align-items: center; gap: 6px; padding: 1px 8px 0 6px; border-right: 2px solid #777; border-bottom: 2px solid #777; border-radius: 0 0 3px 0; }
.out-tabs .cutleft { min-width: 114px; padding: 1px 6px 0 0; white-space: nowrap; }
.out-tabs svg { width: 20px; height: 20px; }
.status { display: flex; gap: 4px; height: 8px; padding: 4px 25px 0 296px; }
.status i { border: solid #999; border-width: 1px 0 0 1px; }
.s1 { flex: 265; } .s2 { flex: 265; background: #ff0; } .s3 { width: 24px; } .s4 { width: 35px; } .s5 { width: 45px; } .s6 { width: 43px; }

.mark { position: absolute; left: 736px; top: 411px; transform: rotate(-30deg); transform-origin: 0 100%; white-space: nowrap; color: rgba(255, 255, 255, .25); -webkit-text-stroke: 1px rgba(215, 215, 215, .5); pointer-events: none; font-weight: 700; }
.m1 { font-size: 42px; line-height: 42px; font-family: "Noto Sans CJK SC", sans-serif; padding-left: 7px; }
.m2 { font-size: 26px; line-height: 30px; }

.taskbar { position: absolute; left: 0; right: 0; bottom: 0; height: 18px; display: flex; align-items: flex-end; border-top: 1px solid #bbb; background: linear-gradient(90deg, #dde3ea, #e8e8cf 12%, #efdfd8 19%, #f2e2d2 28%, #efe4b4 42%, #f0e2d6 50%, #ebe8e8 57%, #e8ecd8 70%, #ebe9e0 80%, #e5efd0); overflow: hidden; }
.wid { width: 30px; height: 2px; margin-left: 26px; background: #0a6fc4; }
.start { width: 28px; height: 2px; margin-left: 419px; background: linear-gradient(90deg, #4cc8f4 13px, transparent 13px 15px, #1a90e0 15px); }
.search { width: 268px; height: 8px; margin-left: 22px; background: #faf6e8; border-radius: 14px 14px 0 0; }
.apps { display: flex; margin-left: 9px; }
.apps button { width: 55px; height: 12px; display: flex; align-items: flex-end; justify-content: center; }
.apps i { width: 30px; height: 3px; }
.apps .k1 { width: 22px; background: #fff; }
.apps .k2 { width: 20px; background: #fff; border-radius: 8px 8px 0 0; }
.apps .k3 { width: 22px; background: #2ac4d4; border-radius: 9px 9px 0 0; }
.apps .k4 { width: 12px; margin-right: 20px; background: #e8a820; }
.apps .k5 { width: 15px; margin-right: 8px; background: #1ab0f8; }
.apps .k6 { background: #1294d4; margin-right: 8px; }
.apps .k7 { width: 20px; height: 9px; margin-left: 10px; background: #ffc010; border-radius: 10px 10px 0 0; }
.apps .k8 { margin-right: 8px; background: #00b010; }
.apps .k9 { margin-right: 8px; background: #aaa; border: 1px solid #222; border-bottom: 0; }
.apps .act { width: 49px; margin: 0 6px 0 0; background: #f7f7ee; border-radius: 5px 5px 0 0; }
.apps .k10 { background: linear-gradient(90deg, #66f, #22a 60%, #006); }
.apps .k11 { margin-right: 8px; background: #eee; border: 1px solid #222; border-bottom: 0; }
```
